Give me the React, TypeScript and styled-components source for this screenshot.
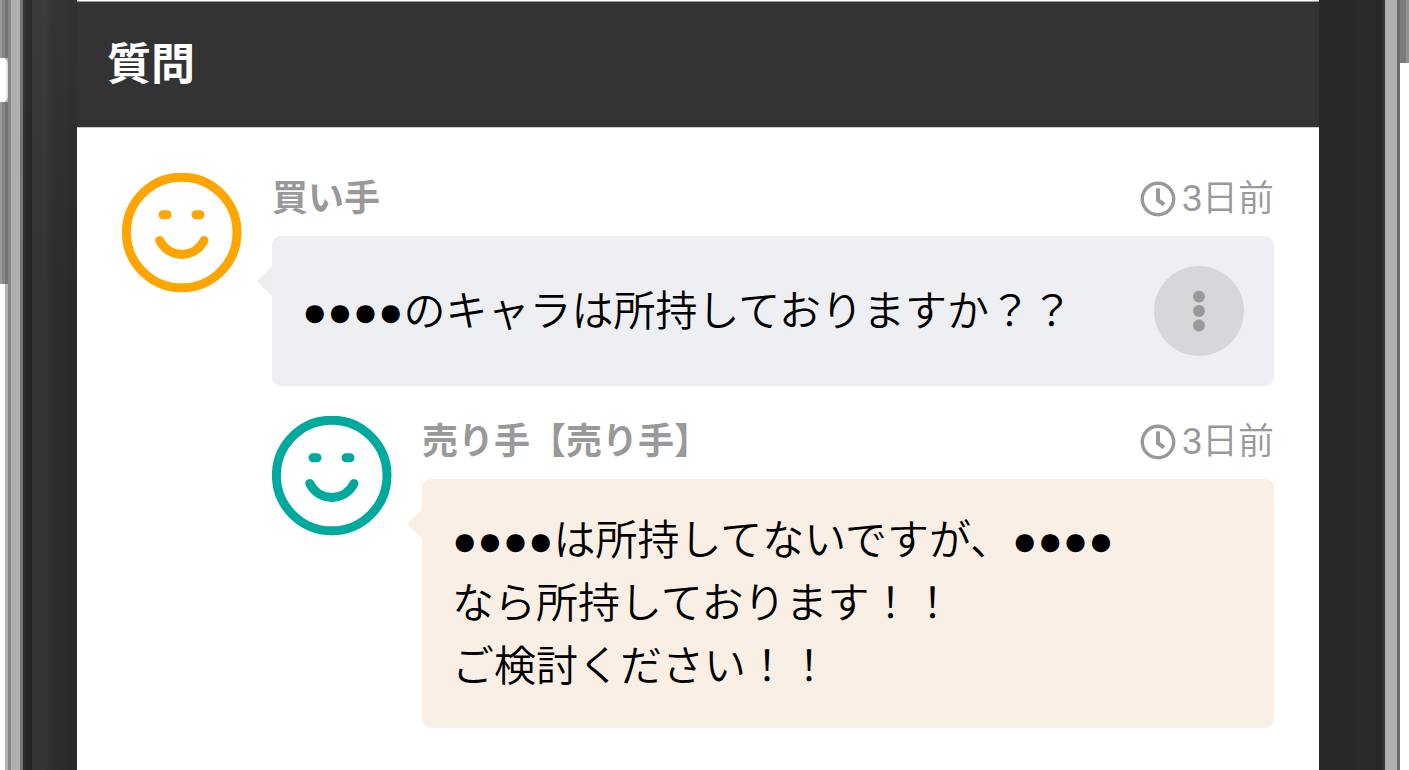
import React from "react";
import styled, { createGlobalStyle } from "styled-components";
import { FaEllipsisV, FaRegClock } from "react-icons/fa";

const GlobalStyle = createGlobalStyle`
  *, *::before, *::after { box-sizing: border-box; }
  body {
    margin: 0;
    background: #fff;
    color: #000;
    font-family: "Liberation Sans", "Noto Sans CJK JP", sans-serif;
  }
`;

const Phone = styled.div`
  display: flex;
  min-height: 100vh;
`;

const LeftEdge = styled.div`
  display: flex;
  flex: 0 0 77px;
`;

const RightEdge = styled.div`
  display: flex;
  flex: 0 0 90px;
`;

const LeftKeys = styled.div`
  flex: 0 0 8px;
  background: linear-gradient(90deg, #fff 5px, #b4b4b4 5px);
`;

const RightKeys = styled.div`
  flex: 0 0 9px;
`;

const Key = styled.div<{ $side: "left" | "right"; $height: number }>`
  height: ${(p) => p.$height}px;
  background: ${(p) =>
    p.$side === "left"
      ? "linear-gradient(90deg, #999 2px, #868686 2px, #868686 5px, #757575 5px)"
      : "linear-gradient(90deg, #7c7c7c 6px, #929292 6px)"};
`;

const KeyGap = styled.div`
  height: 44px;
  border-radius: 0 6px 6px 0;
  background: linear-gradient(90deg, #fff 5px, #d8d8d8 8px);
`;

const LeftFrame = styled.div`
  flex: 1;
  background:
    linear-gradient(180deg, rgba(255, 255, 255, 0.04), rgba(255, 255, 255, 0) 300px) 15px 0 / 54px 100% no-repeat,
    linear-gradient(
      90deg,
      #888 3px, #b0b0b0 3px, #b0b0b0 12px, #747474 12px, #747474 15px,
      #2c2c2c 15px, #2c2c2c 18px, #242424 18px, #242424 24px,
      #333 24px, #343434 38px, #2e2e2e 42px, #2c2c2c 54px, #292929 69px
    );
`;

const RightFrame = styled.div`
  flex: 1;
  background: linear-gradient(
    90deg,
    #282828 34px, #2b2b2b 40px, #2b2b2b 57px, #262626 57px, #262626 63px,
    #343434 63px, #343434 66px, #b0b0b0 66px, #b0b0b0 78px, #6a6a6a 78px
  );
`;

const Screen = styled.main`
  flex: 1;
  min-width: 0;
  padding-top: 1px;
  background: #fff;
`;

const TitleBar = styled.header`
  padding: 30px;
  border-top: 1px solid #999;
  border-bottom: 1px solid #ccc;
  background: #333;
  color: #fff;
`;

const Title = styled.h1`
  margin: 0;
  font-size: 44px;
  line-height: 65px;
  font-weight: 700;
`;

const Thread = styled.div`
  display: flex;
  flex-direction: column;
  gap: 30px;
  padding: 45px;
`;

const Comment = styled.article<{ $reply?: boolean }>`
  display: flex;
  align-items: flex-start;
  gap: 30px;
  padding-left: ${(p) => (p.$reply ? 150 : 0)}px;
`;

const Avatar = styled.svg`
  flex: 0 0 120px;
  height: 120px;
`;

const Body = styled.div`
  flex: 1;
  min-width: 0;
`;

const Meta = styled.div`
  display: flex;
  justify-content: space-between;
  align-items: center;
  margin-bottom: 11px;
  color: #999;
  font-size: 36px;
  line-height: 52px;
`;

const Author = styled.strong`
  font-weight: 700;
`;

const Time = styled.time`
  display: flex;
  align-items: center;
  gap: 6px;
  font-weight: 350;
`;

const Bubble = styled.div<{ $fill: string; $tail: string }>`
  position: relative;
  display: flex;
  align-items: center;
  justify-content: space-between;
  gap: 30px;
  padding: 30px;
  border-radius: 9px;
  background: ${(p) => p.$fill};

  &::before {
    content: "";
    position: absolute;
    top: 30px;
    right: 100%;
    border: 15px solid transparent;
    border-left-width: 0;
    border-right-color: ${(p) => p.$tail};
  }
`;

const Message = styled.p`
  margin: 0;
  font-size: 42px;
  line-height: 63px;
  font-weight: 350;
`;

const MenuButton = styled.button`
  display: flex;
  flex: 0 0 90px;
  align-items: center;
  justify-content: center;
  height: 90px;
  padding: 0;
  border: 0;
  border-radius: 50%;
  background: #d6d7da;
  color: #999;
  font-size: 42px;
  cursor: pointer;
`;

function Smiley({ color, label }: { color: string; label: string }) {
  return (
    <Avatar viewBox="0 0 120 120" role="img" aria-label={label}>
      <circle cx="59.7" cy="59.5" r="55.3" fill="none" stroke={color} strokeWidth="9" />
      <rect x="36.5" y="37.3" width="13" height="9" rx="4.5" fill={color} />
      <rect x="69.5" y="37.3" width="13" height="9" rx="4.5" fill={color} />
      <path
        d="M37.700 67.500C47 86 72.700 86 82 67.500"
        fill="none"
        stroke={color}
        strokeWidth="9"
        strokeLinecap="round"
      />
    </Avatar>
  );
}

function MetaRow({ author, time }: { author: string; time: string }) {
  return (
    <Meta>
      <Author>{author}</Author>
      <Time>
        <FaRegClock aria-hidden="true" />
        {time}
      </Time>
    </Meta>
  );
}

export default function App() {
  return (
    <>
      <GlobalStyle />
      <Phone>
        <LeftEdge>
          <LeftKeys>
            <Key $side="left" $height={58} />
            <KeyGap />
            <Key $side="left" $height={182} />
          </LeftKeys>
          <LeftFrame />
        </LeftEdge>
        <Screen>
          <TitleBar>
            <Title>質問</Title>
          </TitleBar>
          <Thread>
            <Comment>
              <Smiley color="#fea500" label="買い手" />
              <Body>
                <MetaRow author="買い手" time="3日前" />
                <Bubble $fill="#eeeff3" $tail="#eee">
                  <Message>●●●●のキャラは所持しておりますか？？</Message>
                  <MenuButton type="button" aria-label="メニュー">
                    <FaEllipsisV aria-hidden="true" />
                  </MenuButton>
                </Bubble>
              </Body>
            </Comment>
            <Comment $reply>
              <Smiley color="#00a99d" label="売り手" />
              <Body>
                <MetaRow author="売り手【売り手】" time="3日前" />
                <Bubble $fill="#faefe5" $tail="#faefe5">
                  <Message>
                    ●●●●は所持してないですが、●●●●
                    <br />
                    なら所持しております！！
                    <br />
                    ご検討ください！！
                  </Message>
                </Bubble>
              </Body>
            </Comment>
          </Thread>
        </Screen>
        <RightEdge>
          <RightFrame />
          <RightKeys>
            <Key $side="right" $height={63} />
          </RightKeys>
        </RightEdge>
      </Phone>
    </>
  );
}
